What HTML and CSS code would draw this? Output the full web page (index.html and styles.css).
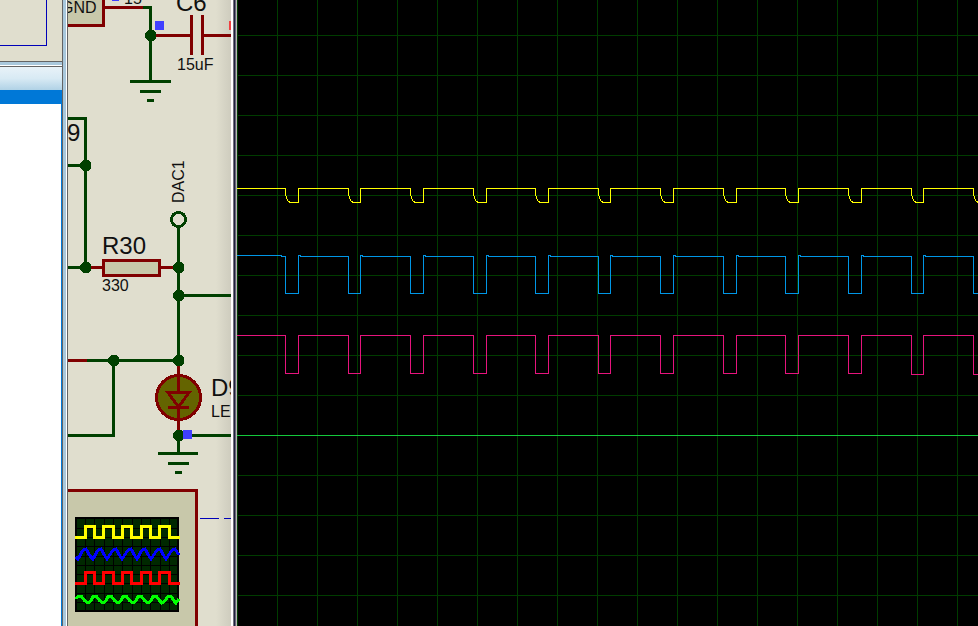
FILE: index.html
```html
<!DOCTYPE html>
<html lang="en">
<head>
<meta charset="utf-8">
<title>Schematic and oscilloscope</title>
<link rel="stylesheet" href="styles.css">
</head>
<body>
<div class="workspace">
  <aside class="sidebar">
    <div class="overview"><div class="overview-frame"></div></div>
    <div class="splitter"></div>
    <div class="list-header"></div>
    <div class="list-selected"></div>
    <div class="list-body"></div>
  </aside>
  <div class="divider"></div>
  <main class="schematic">
    <svg class="drawing" width="163" height="626" viewBox="68 0 163 626" role="img" aria-label="Circuit schematic">
      <g class="part">
        <rect x="40" y="-20" width="63.500" height="45.500"/>
        <rect x="40" y="490.500" width="156.500" height="160"/>
      </g>
      <g class="pin">
        <path d="M105 7.500H144M155 35.500H191M203 35.500H231M191.500 15V55M202.500 15V55M90 267.500H103M161 267.500H175M68 360.500H88"/>
      </g>
      <g class="wire">
        <path d="M143 7.500H150.500V81M130 81.500H171M140 91.500H161M147 100.500H154"/>
        <path d="M68 118.500H85.500V267M68 165.500H85M68 267.500H91"/>
        <path d="M178.500 226V362M178 295.500H231M87 360.500H178M113.500 360V435.500H68M178.500 435V453M190 435.500H231M158 453.500H198M168 463.500H189M175 472.500H182"/>
      </g>
      <g class="node">
        <path id="dot" d="M148 30H153L156 33V38L153 41H148L145 38V33Z"/>
        <use href="#dot" x="-65" y="130"/>
        <use href="#dot" x="-65" y="232"/>
        <use href="#dot" x="28" y="232"/>
        <use href="#dot" x="28" y="260"/>
        <use href="#dot" x="-37" y="325"/>
        <use href="#dot" x="28" y="325"/>
        <use href="#dot" x="28" y="400"/>
      </g>
      <circle class="terminal" cx="178.500" cy="219.500" r="7"/>
      <rect class="resistor" x="103.500" y="260.500" width="56" height="15"/>
      <circle class="lamp" cx="178.500" cy="397.500" r="22"/>
      <path class="pin-line" d="M178.500 366V392M178.500 407V430M168 407.500H189"/>
      <path class="diode" d="M168 392.500H189L178.500 407Z"/>
      <path class="probe" d="M155 21H164V30H155ZM112 -4H119V1H112ZM183 430H192V439H183Z"/>
      <rect class="probe-high" x="229" y="21" width="4" height="9"/>
      <path class="guide" d="M200 518.500H219M224 518.500H231"/>

      <g class="screen">
        <rect class="screen-back" x="76" y="518" width="102" height="93"/>
        <path class="screen-grid" d="M85.500 518V611M94.500 518V611M104.500 518V611M113.500 518V611M122.500 518V611M132.500 518V611M141.500 518V611M150.500 518V611M160.500 518V611M169.500 518V611M76 528.500H178M76 537.500H178M76 546.500H178M76 556.500H178M76 565.500H178M76 574.500H178M76 583.500H178M76 593.500H178M76 602.500H178"/>
        <path class="wave yellow" d="M75 537.500H85.500V526.500H94.500V537.500H103.500V526.500H113.500V537.500H122.500V526.500H131.500V537.500H141.500V526.500H150.500V537.500H159.500V526.500H169.500V537.500H180"/>
        <path class="wave blue" d="M76 557L78 559L83 550L86 549L90 556L93 559L98 550L101 549L105 556L107 559L113 550L116 549L120 556L122 559L128 550L131 549L135 556L137 559L142 550L145 549L149 556L151 559L157 550L160 549L164 556L166 559L172 550L175 549L179 555"/>
        <path class="wave red" d="M75 583.500H85.500V572.500H94.500V583.500H103.500V572.500H113.500V583.500H122.500V572.500H131.500V583.500H141.500V572.500H150.500V583.500H159.500V572.500H169.500V583.500H180"/>
        <path class="wave green" d="M76 599L78 596L81 596L85 601L88 603L91 601L93 596L96 596L100 601L103 603L106 601L108 596L111 596L115 601L118 603L121 601L123 596L126 596L130 601L133 603L136 601L138 596L141 596L145 601L148 603L151 601L153 596L156 596L160 601L162 603L165 601L168 596L171 596L174 601L176 603L179 599"/>
      </g>

      <g class="label">
        <text class="small" x="61" y="13">GND</text>
        <text class="small" x="124" y="4">15</text>
        <text class="large" x="176" y="11">C6</text>
        <text class="small" x="177" y="70">15uF</text>
        <text class="large" x="67" y="141">9</text>
        <text class="small" transform="translate(184 203) rotate(-90)">DAC1</text>
        <text class="large" x="102" y="254">R30</text>
        <text class="small" x="102" y="291">330</text>
        <text class="large" x="211" y="396">D9</text>
        <text class="small" x="211" y="417">LED</text>
      </g>
    </svg>
  </main>
  <div class="window-edge"></div>
  <section class="scope">
    <svg class="traces" id="traces" width="100%" height="626" role="img" aria-label="Oscilloscope traces"></svg>
  </section>
</div>
<script src="scope.js"></script>
</body>
</html>
```
FILE: styles.css
```css
* { box-sizing: border-box; }
body { margin: 0; background: #000; font-family: "Liberation Sans", Arial, sans-serif; }
.workspace { display: flex; min-height: 100vh; overflow: hidden; }

.sidebar { display: flex; flex-direction: column; flex: 0 0 63px; border-right: 1px solid #646464; }
.overview { height: 62px; background: #e0dece; border-bottom: 1px solid #646464; }
.overview-frame { width: 47px; height: 46px; border: solid #0000b8; border-width: 0 1px 1px 0; }
.splitter { height: 5px; background: linear-gradient(#a9c8dc 3px, #fff 3px); border-bottom: 1px solid #646464; }
.list-header { height: 23px; background: linear-gradient(#e8f2f8, #d8eaf4 50%, #b0d2e6); }
.list-selected { height: 14px; background: #0078d7; }
.list-body { flex: 1; background: #fff; border-right: 1px solid #0078d7; }

.divider { flex: 0 0 5px; background: linear-gradient(90deg, #a9c8dc 3px, #fff 3px 4px, #646464 4px); }
.schematic { flex: 0 0 163px; background: linear-gradient(90deg, #e0dece 148px, #ceccbe); }
.drawing { display: block; shape-rendering: crispEdges; }
.window-edge { flex: 0 0 6px; background: linear-gradient(90deg, #fff 2px, #70707c 2px 3px, #202040 3px 4px, #686874 4px 5px, #b8b8b8 5px); }

.part rect { fill: #c8c8aa; stroke: #800000; stroke-width: 3; }
.pin path, .pin-line { fill: none; stroke: #800000; stroke-width: 3; }
.wire path { fill: none; stroke: #004000; stroke-width: 3; }
.node { fill: #004000; }
.terminal { fill: #e0dece; stroke: #004000; stroke-width: 3; }
.resistor { fill: #c8c8aa; stroke: #800000; stroke-width: 3; }
.lamp { fill: #646400; stroke: #800000; stroke-width: 3; }
.diode { fill: #646400; stroke: #800000; stroke-width: 3; }
.probe { fill: #4040ff; }
.probe-high { fill: #f04040; }
.guide { fill: none; stroke: #0000b8; }
.screen-back { fill: #002800; stroke: #000; stroke-width: 2; }
.screen-grid { fill: none; stroke: #000; }
.wave { fill: none; stroke-width: 3; }
.yellow { stroke: #ff0; }
.blue { stroke: #00f; }
.red { stroke: #f00; }
.green { stroke: #0f0; }
.label { fill: #101010; }
.small { font-size: 16px; }
.large { font-size: 24px; }

.scope {
  flex: 1;
  min-width: 0;
  background-color: #000;
  background-image: linear-gradient(90deg, #003c00 1px, transparent 1px), linear-gradient(#003c00 1px, transparent 1px);
  background-size: 40px 40px;
  background-position: 0 35px;
}
.traces { display: block; shape-rendering: crispEdges; }
.traces path { fill: none; stroke-width: 1; }
.axis { stroke: #14c83c; }
.ch-a { stroke: #ffff00; }
.ch-b { stroke: #0096e6; }
.ch-c { stroke: #e6147d; }
```
FILE: scope.js
```js
// Each pulse is [fall, rise] in pixels from the left edge of the scope.
const pulses = [[48, 61], [111, 123], [173, 186], [236, 249], [298, 311], [361, 373],
  [423, 436], [486, 499], [548, 561], [611, 624], [674, 686], [736, 749]];
let a = 'M0 188.5', b = 'M0 255.5H44V256.5', c = 'M0 335.5';
pulses.forEach(([fall, rise], i) => {
  const f = fall + 0.5, r = rise + 0.5, low = i > 9 ? 374.5 : 373.5;
  a += `H${f}V193.5L${f + 1} 198.5L${f + 3} 201.5L${f + 5} 202.5H${r}V188.5`;
  b += `H${f}V293.5H${r}V255.5h2V256.5`;
  c += `H${f}V${low}H${r}V335.5`;
});
document.getElementById('traces').innerHTML =
  `<path class="axis" d="M0 435.5H4000"/><path class="ch-a" d="${a}"/>` +
  `<path class="ch-b" d="${b}"/><path class="ch-c" d="${c}"/>`;
```
